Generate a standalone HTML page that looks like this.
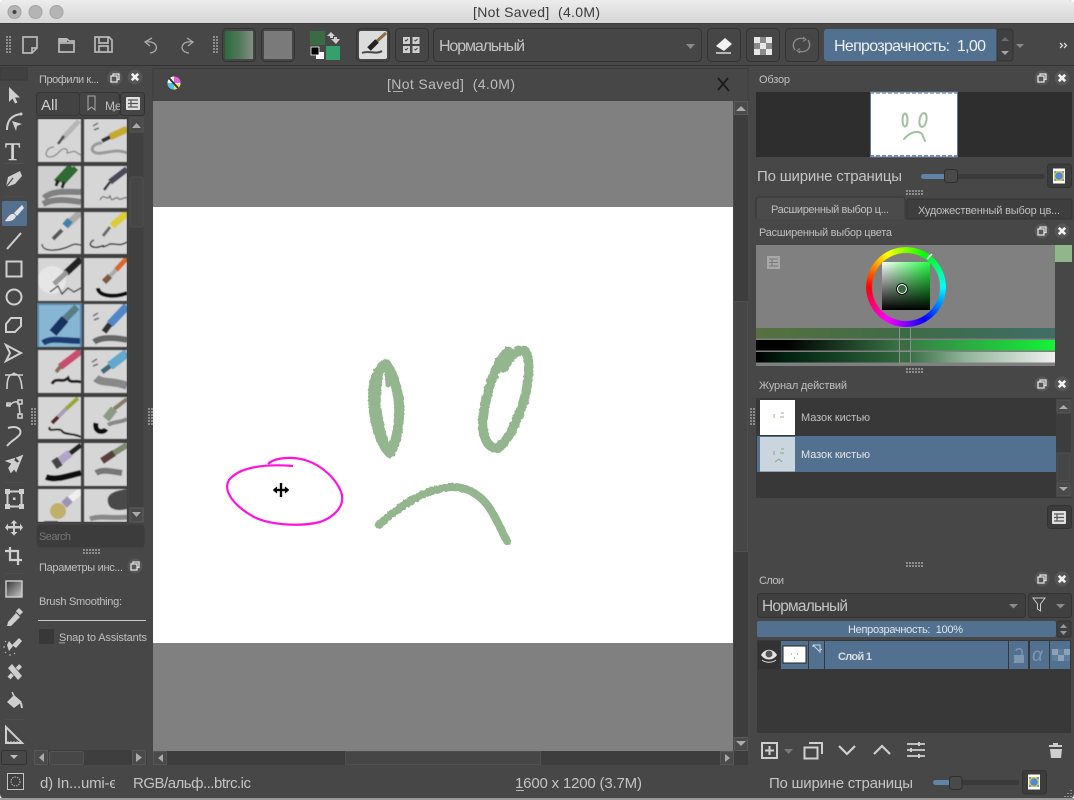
<!DOCTYPE html>
<html><head><meta charset="utf-8"><title>Krita</title>
<style>
html,body{margin:0;padding:0;background:#fff;width:1074px;height:800px;overflow:hidden}
svg.main{position:absolute;left:0;top:0;filter:blur(.35px)}
#wheel{position:absolute;left:866px;top:247px;width:80px;height:80px;border-radius:50%;
background:conic-gradient(from -90deg,#f00,#ff0,#0f0,#0ff,#00f,#f0f,#f00);
-webkit-mask:radial-gradient(circle,transparent 33.5px,#000 34.5px);mask:radial-gradient(circle,transparent 33.5px,#000 34.5px);filter:blur(.3px)}
text{font-family:"Liberation Sans",sans-serif;fill:#c4c4c4;white-space:pre}
.s{font-size:11px;fill:#c0c0c0}
.m{font-size:15px;fill:#c4c4c4}
.l{font-size:16px}
.ic{fill:none;stroke:#cfcfcf;stroke-width:2}
.t{fill:none;stroke:#b8b8b8;stroke-width:1.700}
.f{fill:#cfcfcf}
.btn{fill:#464646;stroke:#333;stroke-width:1}
</style></head><body>
<svg class="main" width="1074" height="800" viewBox="0 0 1074 800" xmlns="http://www.w3.org/2000/svg">
<defs>
<filter id="sb" x="0" y="0" width="1" height="1"><feGaussianBlur stdDeviation=".55"/></filter>
<filter id="rough" x="-10%" y="-10%" width="120%" height="120%"><feTurbulence type="fractalNoise" baseFrequency=".35" numOctaves="2" seed="4"/><feDisplacementMap in="SourceGraphic" scale="2.500"/></filter>
<linearGradient id="tb" x1="0" y1="0" x2="0" y2="1"><stop offset="0" stop-color="#ececec"/><stop offset="1" stop-color="#d5d5d5"/></linearGradient>
<pattern id="dots" width="3" height="3" patternUnits="userSpaceOnUse"><rect width="2" height="2" fill="#8c8c8c"/></pattern>
<pattern id="dash" width="6" height="2" patternUnits="userSpaceOnUse"><rect width="4" height="2" fill="#7590a8"/></pattern>
<linearGradient id="gr1" x1="0" y1="0" x2="1" y2="0"><stop offset="0" stop-color="#2c6a3e"/><stop offset=".5" stop-color="#4f7a5a"/><stop offset="1" stop-color="#858c86"/></linearGradient>
<linearGradient id="gtool" x1="0" y1="0" x2="1" y2="1"><stop offset="0" stop-color="#333"/><stop offset="1" stop-color="#c8c8c8"/></linearGradient>
<linearGradient id="s1"><stop offset="0" stop-color="#57713f"/><stop offset=".5" stop-color="#3e6b47"/><stop offset="1" stop-color="#3f6e66"/></linearGradient>
<linearGradient id="s2"><stop offset="0" stop-color="#000"/><stop offset=".1" stop-color="#000"/><stop offset=".5" stop-color="#3a7a48"/><stop offset="1" stop-color="#14f238"/></linearGradient>
<linearGradient id="s3"><stop offset="0" stop-color="#000"/><stop offset=".1" stop-color="#021"/><stop offset=".5" stop-color="#33693f"/><stop offset=".7" stop-color="#92b49a"/><stop offset="1" stop-color="#f0f0f0"/></linearGradient>
<linearGradient id="sqh"><stop offset="0" stop-color="#fff"/><stop offset="1" stop-color="#22ff44"/></linearGradient>
<linearGradient id="sqv" x1="0" y1="0" x2="0" y2="1"><stop offset="0" stop-color="#000" stop-opacity="0"/><stop offset="1" stop-color="#000"/></linearGradient>
<g id="restore"><circle r="7.5" fill="#565656"/><path d="M-2 -2V-4H4V1.500H2M-4 -2H2V4H-4Z" fill="none" stroke="#e2e2e2" stroke-width="1.300"/></g>
<g id="close"><circle r="7.500" fill="#565656"/><path d="M-3.200 -3.200L3.200 3.200M3.200 -3.200L-3.200 3.200" stroke="#f2f2f2" stroke-width="2.600"/></g>
<rect id="gh" width="18" height="5" fill="url(#dots)"/>
<rect id="gv" width="5" height="18" fill="url(#dots)"/>
<g id="listicon"><rect x="0" y="0" width="14" height="13" fill="#e0e0e0" rx="1"/><path d="M2 3H12M2 6.500H12M2 10H12M5 3V10" stroke="#555" stroke-width="1.200" fill="none"/></g>
<g id="mosaic"><rect x="-6" y="-7.500" width="12" height="15" fill="#fff"/><rect x="-5" y="-5" width="10" height="10" fill="#e0c73a"/><circle r="3.800" fill="#4e8ad8"/><path d="M-5 -5h2v2h-2zM3 -5h2v2h-2zM-5 3h2v2h-2zM3 3h2v2h-2z" fill="#5fa8dd"/></g>
</defs>

<!-- window -->
<rect x="0" y="0" width="1074" height="799" rx="5" fill="#474747"/>
<rect x="0" y="798" width="1074" height="2" fill="#9a9a9a"/>
<path d="M0 24V5Q0 0 5 0H1069Q1074 0 1074 5V24Z" fill="url(#tb)"/>
<rect x="0" y="23" width="1074" height="1" fill="#3c3c3c"/>
<circle cx="14.500" cy="12" r="6.500" fill="#b4b4b4" stroke="#a4a4a4"/><circle cx="14.500" cy="12" r="2" fill="#444"/>
<circle cx="35.500" cy="12" r="6.500" fill="#b4b4b4" stroke="#a4a4a4"/>
<circle cx="56.500" cy="12" r="6.500" fill="#b4b4b4" stroke="#a4a4a4"/>
<text x="473" y="17" font-size="14" style="fill:#3a3a3a" textLength="127">[Not Saved]  (4.0M)</text>

<!-- toolbar -->
<rect x="0" y="65" width="1074" height="1" fill="#343434"/>
<rect x="5" y="35" width="6" height="18" fill="url(#dots)"/>
<path d="M23 37H37V48L32 53H23Z M32 53V48H37" class="t"/>
<path d="M59 39H67L69 41H74V52H59Z M59 43H74" class="t"/><path d="M59 38h8v4h-8z" fill="#b8b8b8"/>
<path d="M95 37H109L112 40V52H95Z M99 37V43H108V37 M99 52V46H108V52" class="t"/>
<path d="M152 38L145 42L150 46" class="ic" style="stroke-width:1.300;stroke:#aaa"/><path d="M146 42C158 40 160 52 150 53" class="ic" style="stroke-width:1.300;stroke:#aaa"/>
<path d="M187 38L193 42L188 46" class="ic" style="stroke-width:1.300;stroke:#aaa"/><path d="M192 42C181 40 178 52 189 53" class="ic" style="stroke-width:1.300;stroke:#aaa"/>
<rect x="213" y="35" width="6" height="18" fill="url(#dots)"/>
<rect x="222.500" y="28.500" width="33" height="33" rx="4" class="btn"/><rect x="225" y="31" width="28" height="28" fill="url(#gr1)"/>
<rect x="261.500" y="28.500" width="33" height="33" rx="4" class="btn"/><rect x="264" y="31" width="28" height="28" fill="#7a7a7a"/>
<rect x="310" y="31" width="15" height="14" fill="#3a6b42"/>
<path d="M331 32L327 36H330V38H333V36H335Z M336 44L340 39H337V37H334V39H331Z" class="f"/>
<rect x="316" y="52" width="8" height="7" fill="#fff"/><rect x="311" y="47" width="8" height="8" fill="#000" stroke="#fff" stroke-width=".8"/>
<rect x="326" y="46" width="14" height="14" fill="#35a06c"/>
<rect x="356.500" y="28.500" width="33" height="33" rx="4" class="btn"/>
<rect x="359" y="31" width="28" height="28" rx="2" fill="#dcdcdc"/>
<path d="M386 33L376 42" stroke="#8a6c3e" stroke-width="3"/><path d="M377 41L369 49" stroke="#222" stroke-width="5"/><path d="M362 53C368 50 376 55 382 51" stroke="#444" stroke-width="2" fill="none"/>
<rect x="395.500" y="28.500" width="33" height="33" rx="4" class="btn"/>
<g fill="#d0d0d0"><rect x="403" y="37" width="7" height="7"/><rect x="412.500" y="37" width="7" height="7"/><rect x="403" y="46" width="7" height="7"/><rect x="412.500" y="46" width="7" height="7"/></g>
<path d="M405 40l1 1 2-2M414.500 40l1 1 2-2M405 49l1 1 2-2M414.500 49l1 1 2-2" stroke="#444" fill="none"/>
<rect x="433.500" y="28.500" width="268" height="33" rx="4" class="btn"/>
<text x="439" y="51" class="l" textLength="86">Нормальный</text>
<path d="M686 44H695L690.500 49Z" fill="#8a8a8a"/>
<rect x="707.500" y="28.500" width="33" height="33" rx="4" class="btn"/>
<path d="M716 46L725 38L732 44L724 51Z" fill="#f2f2f2"/><path d="M716 53H731" stroke="#ddd" stroke-width="1.500"/>
<rect x="746.500" y="28.500" width="33" height="33" rx="4" class="btn"/>
<g fill="#e8e8e8"><rect x="754" y="37" width="6" height="6"/><rect x="766" y="37" width="6" height="6"/><rect x="760" y="43" width="6" height="6"/><rect x="754" y="49" width="6" height="6"/><rect x="766" y="49" width="6" height="6"/></g>
<g fill="#8a8a8a"><rect x="760" y="37" width="6" height="6"/><rect x="754" y="43" width="6" height="6"/><rect x="766" y="43" width="6" height="6"/><rect x="760" y="49" width="6" height="6"/></g>
<rect x="785.500" y="28.500" width="33" height="33" rx="4" class="btn"/>
<path d="M795 50C790 43 797 36 804 39M808 40C813 47 806 54 799 51" fill="none" stroke="#8e8e8e" stroke-width="1.300"/><path d="M803 37l3 2.500-3 2M800 53l-3-2.500 3-2" fill="none" stroke="#8e8e8e"/>
<rect x="824" y="29" width="173" height="32" rx="3" fill="#52708f"/>
<text x="834" y="51" class="l" style="fill:#eef1f4" textLength="152">Непрозрачность:  1,00</text>
<rect x="997" y="29" width="16" height="32" rx="3" fill="#404040" stroke="#333"/>
<path d="M1001 41L1005 37L1009 41Z" fill="#6c6c6c"/><path d="M1001 51L1009 51L1005 55Z" fill="#a4a4a4"/>
<path d="M1016 44H1024L1020 48Z" fill="#8a8a8a"/>
<path d="M1060 43L1062.500 45.500L1060 48M1064 43L1066.500 45.500L1064 48" fill="none" stroke="#d8d8d8" stroke-width="1.300"/>

<!-- toolbox -->
<rect x="0" y="68" width="27" height="12" fill="#414141" stroke="#393939"/>
<path d="M9 87V102L12.500 98.500L15 103.500L17.500 102.500L15 97.500H20Z" class="f"/>
<path d="M7 130C7 120 12 115 21 114" class="ic"/><path d="M12 121L22 124L17 126L16 131Z" class="f"/><circle cx="21" cy="114" r="1.500" class="f"/>
<text x="5" y="160" style="font-family:'Liberation Serif',serif;font-size:25px;fill:#d2d2d2;stroke:#d2d2d2;stroke-width:.4">T</text>
<path d="M20 171L8 177L6 187L15 184L22 176Z" class="f"/><path d="M6 187L13 178" stroke="#474747" stroke-width="1.200"/>
<rect x="2" y="201" width="25" height="25" rx="2" fill="#54708f"/>
<path d="M22 205L14 213L17 216L24 208Z M14 214C10 213 8 217 5 221C10 222 15 220 16 216Z" fill="#e4e4e4"/>
<path d="M7 249L21 233" class="ic"/>
<rect x="6.500" y="261.500" width="15" height="15" class="ic"/>
<circle cx="14" cy="297" r="7.500" class="ic"/>
<path d="M11 318H21V326L15 332H6V324Z" class="ic"/>
<path d="M6 345L21 353L6 361L10 353Z" class="ic"/>
<path d="M7 389C7 376 10 374 14 374C18 374 21 376 22 389M5 375L23 375" class="ic" style="stroke-width:1.600"/><circle cx="14" cy="374" r="1.500" class="f"/>
<path d="M6 405H10C14 401 17 401 19 404L20 415M7 403h3v3H7zM18 414h4v4h-4zM18 400h4v4h-4z" class="ic" style="stroke-width:1.600"/>
<path d="M8 428C18 425 22 430 20 434C18 438 12 440 7 446" class="ic"/>
<path d="M22 456L17 458L20 461ZM9 468L14 461L18 464L11 472ZM7 461L14 459L12 463Z M20 461L16 471L14 468Z" class="f" style="stroke:#cfcfcf;stroke-width:1.500"/>
<rect x="7.500" y="491.500" width="14" height="15" class="ic"/><g class="f"><rect x="5" y="489" width="5" height="5"/><rect x="19" y="489" width="5" height="5"/><rect x="5" y="504" width="5" height="5"/><rect x="19" y="504" width="5" height="5"/><rect x="13" y="497.500" width="2.500" height="2.500"/></g>
<path d="M14 520L10.500 523.500H13V526H8V523.500L5 527.500L8 531V528.500H13V532H10.500L14 535.500L17.500 532H15V528.500H20V531L23 527.500L20 523.500V526H15V523.500H17.500Z" class="f"/>
<path d="M10 547V560H22M5 551H18V565" class="ic" style="stroke-width:2.200"/>
<rect x="6" y="581" width="16" height="16" fill="url(#gtool)" stroke="#d0d0d0" stroke-width="1.400"/>
<path d="M7 626L8 622L16 613L20 617L11 626Z" class="f"/><path d="M15 612L19 608L23 612L19 616Z" class="f"/><path d="M14 610L21 617" stroke="#474747"/>
<path d="M12 645L19 638L22 641L16 648Z" class="f"/><path d="M9 641L13 646L9 651L7 645Z" class="f"/><path d="M6 652l-1 1M10 654v2M14 653l1 1M5 647H3M6 642l-1-1" stroke="#bbb"/>
<path d="M8 668L12 664L22 676L18 680Z" class="f"/><path d="M9 678L21 665" stroke="#cfcfcf" stroke-width="4" stroke-dasharray="5 1"/>
<path d="M7 702L14 695L22 702L14 708Z" class="f"/><path d="M12 692L14 696" stroke="#cfcfcf" stroke-width="1.500"/><path d="M21 703L22 708" stroke="#cfcfcf" stroke-width="2"/>
<path d="M6 727V743H22Z" class="ic"/><path d="M8 743v-2M11 743v-2M14 743v-2M17 743v-2" stroke="#cfcfcf"/>
<g fill="#5a5a5a"><rect x="4" y="163" width="20" height="1" opacity=".5"/><rect x="5" y="196" width="19" height=".8" opacity=".5"/><rect x="5" y="482" width="19" height=".8" opacity=".5"/><rect x="5" y="573" width="19" height=".8" opacity=".5"/><rect x="5" y="719" width="19" height=".8" opacity=".5"/></g>
<rect x="1.500" y="750.500" width="25" height="14" rx="2" fill="#474747" stroke="#333"/><path d="M10 755H18L14 759Z" fill="#bdbdbd"/>
<use href="#gv" x="31" y="408"/>

<!-- brush presets docker -->
<text x="39" y="83" class="s" textLength="60">Профили к...</text>
<use href="#restore" x="115" y="78"/><use href="#close" x="135" y="77"/>
<rect x="36.500" y="92.500" width="43" height="23" rx="3" fill="#434343" stroke="#353535"/>
<text x="41" y="110" font-size="15" style="fill:#d0d0d0">All</text>
<rect x="79.500" y="92.500" width="40" height="23" rx="3" fill="#454545" stroke="#353535"/>
<path d="M88 96H95V110L91.500 107L88 110Z" fill="none" stroke="#aaa"/>
<text x="105" y="110" class="s" style="font-size:12px">Me</text>
<path d="M111 109h6l-3 3z" fill="#8a8a8a"/>
<rect x="120.500" y="92.500" width="24" height="23" rx="3" fill="#454545" stroke="#333"/>
<use href="#listicon" x="126" y="97"/>
<rect x="36" y="117" width="92" height="406" fill="#404040"/>
<!-- thumbs -->
<g filter="url(#sb)">
<svg x="38" y="119" width="43" height="43"><rect width="43" height="43" fill="#d6d6d6"/><path d="M41 2L24 20" stroke="#b5b5b5" stroke-width="5"/><path d="M26 17L20 25" stroke="#444" stroke-width="2.500"/><path d="M16 28C8 28 5 38 12 38C20 38 22 28 28 30C32 32 25 36 33 33C38 31 38 34 43 36" fill="none" stroke="#888" stroke-width="1.300"/></svg>
<svg x="84" y="119" width="43" height="43"><rect width="43" height="43" fill="#d6d6d6"/><path d="M43 10L26 18" stroke="#c8aa2c" stroke-width="7"/><path d="M26 18L18 22" stroke="#333" stroke-width="4"/><path d="M18 24C6 24 4 36 18 34C26 33 34 30 43 34" fill="none" stroke="#999" stroke-width="3"/><path d="M9 7L14 4M10 11L15 9" stroke="#666" stroke-width="1.500"/></svg>
<svg x="38" y="166" width="43" height="42"><rect width="43" height="42" fill="#cfcfcf"/><path d="M38 2L24 17M33 0L18 16" stroke="#2e6a32" stroke-width="6"/><path d="M20 14L18 20M26 16L24 22" stroke="#222" stroke-width="3"/><path d="M6 32C14 24 30 26 43 26M5 38C16 32 30 34 43 36" stroke="#666" stroke-width="6" fill="none" opacity=".75"/></svg>
<svg x="84" y="166" width="43" height="42"><rect width="43" height="42" fill="#d6d6d6"/><path d="M43 3L26 16" stroke="#4a4a5a" stroke-width="6"/><path d="M26 16L20 24" stroke="#333" stroke-width="2.500"/><path d="M16 34C20 26 22 36 26 30C28 38 30 30 34 32C36 36 40 30 43 32" fill="none" stroke="#666" stroke-width="1.200"/></svg>
<svg x="38" y="212" width="43" height="42"><rect width="43" height="42" fill="#d6d6d6"/><path d="M43 0L28 14" stroke="#aaa" stroke-width="7"/><path d="M32 8L27 14" stroke="#3e82aa" stroke-width="7"/><path d="M24 18L15 27" stroke="#555" stroke-width="4"/><path d="M4 32C4 40 20 40 34 33C38 31 40 33 43 33" fill="none" stroke="#222" stroke-width="1.300"/></svg>
<svg x="84" y="212" width="43" height="42"><rect width="43" height="42" fill="#d6d6d6"/><path d="M43 1L28 14" stroke="#ddcc33" stroke-width="7"/><path d="M26 15L19 24" stroke="#666" stroke-width="3"/><path d="M10 28C2 32 8 38 18 34C22 32 14 38 26 32C30 31 36 35 43 30" fill="none" stroke="#333" stroke-width="1.500"/></svg>
<svg x="38" y="258" width="43" height="43"><rect width="43" height="43" fill="#d6d6d6"/><circle cx="14" cy="22" r="14" fill="#e6e6e6"/><path d="M43 1L28 15" stroke="#222" stroke-width="7"/><path d="M29 14L16 26" stroke="#999" stroke-width="5"/><path d="M12 34L20 28L24 36L30 30L36 34L43 30" fill="none" stroke="#333" stroke-width="1.300"/></svg>
<svg x="84" y="258" width="43" height="43"><rect width="43" height="43" fill="#d6d6d6"/><path d="M43 0L32 12" stroke="#d8682a" stroke-width="5"/><path d="M32 12L26 18" stroke="#aaa" stroke-width="4"/><path d="M26 18L20 24" stroke="#7a5a3c" stroke-width="6"/><path d="M14 30C14 38 30 40 43 35" fill="none" stroke="#111" stroke-width="4"/></svg>
<rect x="37" y="303" width="45" height="44" fill="#5a85a8"/>
<svg x="39" y="305" width="41" height="42"><rect width="41" height="42" fill="#86b6d4"/><path d="M38 2L24 16" stroke="#5a7d85" stroke-width="7"/><path d="M26 14L14 28" stroke="#13305e" stroke-width="9"/><path d="M4 38C12 32 26 36 41 36" stroke="#1c3c72" stroke-width="6" fill="none"/></svg>
<svg x="84" y="304" width="43" height="43"><rect width="43" height="43" fill="#d6d6d6"/><path d="M43 2L26 20" stroke="#4f86c8" stroke-width="8"/><path d="M26 20L20 28" stroke="#333" stroke-width="6"/><path d="M10 38C18 32 34 34 43 36" stroke="#666" stroke-width="6" fill="none"/><path d="M9 12L14 9M10 16L15 14" stroke="#666" stroke-width="1.500"/></svg>
<svg x="38" y="350" width="43" height="43"><rect width="43" height="43" fill="#d6d6d6"/><path d="M43 1L22 17" stroke="#c84e6e" stroke-width="7"/><path d="M23 16L18 22" stroke="#8a6c5a" stroke-width="4"/><path d="M14 34C18 26 24 34 30 28C32 34 36 30 43 32" fill="none" stroke="#222" stroke-width="3"/></svg>
<svg x="84" y="350" width="43" height="43"><rect width="43" height="43" fill="#d6d6d6"/><path d="M43 3L26 16" stroke="#62a8cc" stroke-width="9"/><path d="M26 16L18 22" stroke="#3e6a7a" stroke-width="5"/><path d="M12 28C18 34 30 30 43 36" stroke="#666" stroke-width="8" fill="none" opacity=".7"/><path d="M8 12L13 9M9 16L14 14" stroke="#666" stroke-width="1.500"/></svg>
<svg x="38" y="397" width="43" height="42"><rect width="43" height="42" fill="#d6d6d6"/><path d="M40 1L28 12" stroke="#9aa82e" stroke-width="4"/><path d="M28 12L20 20" stroke="#a99aba" stroke-width="4"/><path d="M20 20L14 26" stroke="#582222" stroke-width="4"/><path d="M12 30C8 36 22 30 24 34C26 38 36 36 43 40" fill="none" stroke="#111" stroke-width="2"/></svg>
<svg x="84" y="397" width="43" height="42"><rect width="43" height="42" fill="#d6d6d6"/><path d="M43 2L30 12" stroke="#8a7a62" stroke-width="4"/><path d="M30 12L22 22" stroke="#8a9a84" stroke-width="8"/><path d="M12 26C10 36 20 36 22 32" stroke="#111" stroke-width="5" fill="none"/><path d="M24 28C30 24 36 26 43 22" stroke="#888" stroke-width="4" fill="none"/></svg>
<svg x="38" y="443" width="43" height="43"><rect width="43" height="43" fill="#d6d6d6"/><path d="M43 2L30 12" stroke="#222" stroke-width="5"/><path d="M32 10L22 18" stroke="#b2a6c8" stroke-width="8"/><path d="M22 18L16 22" stroke="#444" stroke-width="10"/><path d="M8 34C18 38 32 32 43 30" stroke="#111" stroke-width="6" fill="none"/></svg>
<svg x="84" y="443" width="43" height="43"><rect width="43" height="43" fill="#d6d6d6"/><path d="M43 2L30 10" stroke="#7a8a6a" stroke-width="6"/><path d="M30 10L18 18" stroke="#5a3c3c" stroke-width="7"/><path d="M12 30C18 26 26 28 38 30" stroke="#777" stroke-width="6" fill="none"/></svg>
<svg x="38" y="489" width="43" height="33"><rect width="43" height="33" fill="#d6d6d6"/><path d="M43 2L30 12" stroke="#eee" stroke-width="7"/><path d="M32 10L26 16" stroke="#a094b6" stroke-width="8"/><circle cx="20" cy="22" r="8" fill="#c0b06a"/><path d="M6 33H20" stroke="#444" stroke-width="2"/></svg>
<svg x="84" y="489" width="43" height="33"><rect width="43" height="33" fill="#d6d6d6"/><path d="M24 14C22 6 28 2 43 0V20C36 22 26 22 24 14Z" fill="#4a4a4a"/><path d="M6 30C16 26 30 30 43 28" stroke="#888" stroke-width="5" fill="none"/></svg>
</g>
<rect x="128.500" y="117.500" width="15" height="406" fill="#404040"/>
<rect x="130" y="118" width="13" height="14" fill="#4a4a4a" stroke="#555"/><path d="M132 128L136.500 123L141 128Z" fill="#aaa"/>
<rect x="130" y="177" width="13" height="50" rx="2" fill="#464646" stroke="#4f4f4f"/>
<rect x="130" y="508" width="13" height="14" fill="#4a4a4a" stroke="#5c5c5c"/><path d="M132 512L141 512L136.500 517Z" fill="#aaa"/>
<rect x="36.500" y="524.500" width="108" height="23" rx="3" fill="#3c3c3c"/>
<text x="39" y="540" class="s" style="fill:#767676" textLength="32">Search</text>
<use href="#gh" x="83" y="549"/>
<text x="39" y="571" class="s" textLength="84">Параметры инс...</text>
<use href="#restore" x="135" y="566"/>
<text x="39" y="605" class="s" textLength="83">Brush Smoothing:</text>
<rect x="38" y="620" width="108" height="1" fill="#c8c8c8"/>
<rect x="39" y="629" width="15" height="15" fill="#383838"/>
<text x="59" y="641" class="s" textLength="88">Snap to Assistants</text>
<rect x="59" y="642.500" width="6" height=".8" fill="#bbb"/>
<!-- bottom-left scrollbar -->
<rect x="34" y="750" width="113" height="15" fill="#3e3e3e"/>
<rect x="34.500" y="750.500" width="13" height="14" fill="#4a4a4a" stroke="#565656"/><path d="M44 753V762L39 757.500Z" fill="#aaa"/>
<rect x="49.500" y="751.500" width="34" height="13" rx="2" fill="#474747" stroke="#545454"/>
<rect x="132.500" y="750.500" width="13" height="14" fill="#4a4a4a" stroke="#565656"/><path d="M136 753V762L142 757.500Z" fill="#aaa"/>

<!-- canvas subwindow -->
<rect x="149" y="68" width="599" height="33" fill="#474747"/>
<path d="M153 101V68.500H748V101" fill="none" stroke="#3c3c3c"/>
<circle cx="174" cy="83" r="6.500" fill="#fff"/><path d="M174 76.500A6.500 6.500 0 0 1 180.500 83H174Z" fill="#e95fd8"/><path d="M174 89.500A6.500 6.500 0 0 0 180 84H174Z" fill="#f4df50"/><path d="M167.500 83A6.500 6.500 0 0 0 174 89.500V83Z" fill="#4cc4e4"/><path d="M169 78L178 88" stroke="#333" stroke-width="2"/>
<text x="387" y="89" font-size="14" style="fill:#bdbdbd" textLength="128">[Not Saved]  (4.0M)</text>
<rect x="393" y="91" width="10" height="1" fill="#aaa"/>
<path d="M718 78L729 91M728 78L718 90" stroke="#1b1b1b" stroke-width="1.800"/>
<rect x="153" y="101" width="580" height="650" fill="#808080"/>
<rect x="153" y="207" width="580" height="436" fill="#fff"/>
<!-- drawing -->
<g fill="none" stroke="#94b68e" stroke-linecap="round" stroke-linejoin="round" filter="url(#rough)">
<path d="M386 364C379 367 373 380 373 396C373 420 380 444 390 453C396 444 400 425 399 405C398 388 392 372 386 364Z" stroke-width="10"/>
<path d="M384 365C378 375 376 395 378 410C380 425 384 440 388 450" stroke-width="7"/>
<path d="M386 365C388 370 387 376 388 385" stroke-width="5"/>
<path d="M508 351C496 363 486 390 483 420C482 436 487 448 497 448C507 444 518 420 524 400C529 382 531 358 525 351C518 348 510 356 504 368" stroke-width="9.500"/>
<path d="M379 525C395 510 420 490 450 487C470 486 484 498 492 512C498 522 502 532 507 541" stroke-width="8"/>
</g>
<path d="M293 466C268 464 240 466 229 480C222 492 236 507 254 517C270 525 300 527 320 522C334 517 344 507 342 495C338 480 322 465 305 460C290 456 274 458 268 464" fill="none" stroke="#ff12de" stroke-width="2.200"/>
<path d="M281 483V497M274 490H288" stroke="#aaa" stroke-width="4.500" opacity=".3"/>
<path d="M281 483V497M274 490H288" stroke="#000" stroke-width="2.200"/><path d="M277 487L273.500 490L277 493M285 487L288.500 490L285 493" fill="#000" stroke="#000"/>

<!-- canvas right scrollbar -->
<rect x="734" y="101" width="14" height="650" fill="#3d3d3d"/>
<rect x="734.500" y="101.500" width="13" height="13" fill="#4a4a4a" stroke="#5a5a5a"/><path d="M736 111L741 106L746 111Z" fill="#aaa"/>
<rect x="734.500" y="301.500" width="13" height="250" fill="#464646" stroke="#4f4f4f"/>
<rect x="734.500" y="737.500" width="13" height="13" fill="#4a4a4a" stroke="#5a5a5a"/><path d="M736 741H746L741 746Z" fill="#aaa"/>
<use href="#gv" x="148" y="408"/>
<!-- canvas bottom scrollbar -->
<rect x="153" y="751" width="595" height="14" fill="#3d3d3d"/>
<rect x="153.500" y="751.500" width="13" height="13" fill="#4a4a4a" stroke="#565656"/><path d="M163 754V762L158 758Z" fill="#aaa"/>
<rect x="345.500" y="751.500" width="195" height="13" fill="#464646" stroke="#505050"/>
<rect x="720.500" y="751.500" width="13" height="13" fill="#4a4a4a" stroke="#565656"/><path d="M725 754V762L730 758Z" fill="#aaa"/>

<!-- right: overview -->
<text x="759" y="83" class="s" textLength="31">Обзор</text>
<use href="#restore" x="1042" y="78"/><use href="#close" x="1062" y="78"/>
<rect x="756" y="92" width="316" height="65" fill="#2e2e2e"/>
<rect x="870.500" y="92" width="87" height="65" fill="#fff" stroke="#5a7a98"/>
<rect x="871" y="92" width="86" height="2" fill="url(#dash)" opacity=".7"/>
<rect x="871" y="155" width="86" height="2" fill="url(#dash)"/>
<g fill="none" stroke="#a3c09e" stroke-linecap="round"><ellipse cx="905" cy="120" rx="2.500" ry="6.500" stroke-width="2"/><ellipse cx="923" cy="120" rx="3.500" ry="7" transform="rotate(10 923 120)" stroke-width="2"/><path d="M904 139C910 132 918 130 922 134L925 141" stroke-width="2"/></g>
<text x="757" y="181" class="m" textLength="145">По ширине страницы</text>
<rect x="921" y="174" width="124" height="5" rx="2.500" fill="#3a3a3a"/><rect x="921" y="174" width="26" height="5" rx="2.500" fill="#5f84a8"/>
<rect x="944.500" y="169.500" width="13" height="13" rx="3" fill="#4a4a4a" stroke="#2f2f2f"/>
<rect x="1047.500" y="164" width="24" height="23.500" rx="3" fill="#3c3c3c" stroke="#333"/><use href="#mosaic" x="1059" y="176"/>
<use href="#gh" x="906" y="190"/>
<!-- tabs -->
<path d="M756 219V200Q756 197 759 197H902Q905 197 905 200V219" fill="#4b4b4b" stroke="#353535"/>
<path d="M907 219V201Q907 199 909 199H1070Q1072 199 1072 201V219Z" fill="#3e3e3e" stroke="#333"/>
<text x="771" y="213" class="s" textLength="118">Расширенный выбор ц...</text>
<text x="918" y="214" class="s" textLength="142">Художественный выбор цв...</text>
<text x="759" y="236" class="s" textLength="133">Расширенный выбор цвета</text>
<use href="#restore" x="1042" y="231"/><use href="#close" x="1062" y="231"/>
<!-- color selector -->
<rect x="756" y="245" width="299" height="121" fill="#808080"/>
<rect x="1055" y="245" width="17" height="17" fill="#91b68c"/>
<rect x="767" y="256" width="13" height="13" fill="#a8a8a8"/><path d="M769 259H778M769 262.500H778M769 266H778M772 259V266" stroke="#777" fill="none"/>
<rect x="882" y="262" width="48" height="48" fill="url(#sqh)"/><rect x="882" y="262" width="48" height="48" fill="url(#sqv)"/>
<circle cx="902" cy="289" r="4.500" fill="#39683f" stroke="#fff" stroke-width="1"/><circle cx="902" cy="289" r="5.500" fill="none" stroke="#000" stroke-width=".8"/>
<rect x="756" y="328" width="299" height="10.500" fill="url(#s1)"/>
<rect x="756" y="340" width="299" height="10.500" fill="url(#s2)"/>
<rect x="756" y="352" width="299" height="10.500" fill="url(#s3)"/>
<rect x="900" y="328" width="10" height="11" fill="#3a6b42"/><rect x="900" y="340" width="10" height="11" fill="#3a6b42"/><rect x="900" y="352" width="10" height="11" fill="#3a6b42"/>
<g fill="none" stroke="#8d8d8d"><rect x="899.500" y="327.500" width="11" height="11.500"/><rect x="899.500" y="339.500" width="11" height="11.500"/><rect x="899.500" y="351.500" width="11" height="11.500"/></g>
<use href="#gh" x="906" y="368"/>
<text x="759" y="389" class="s" textLength="88">Журнал действий</text>
<use href="#restore" x="1042" y="384"/><use href="#close" x="1062" y="384"/>
<!-- history -->
<rect x="756" y="398" width="300" height="100" fill="#383838"/>
<rect x="760" y="400" width="35" height="35" fill="#fff"/>
<g fill="none" stroke="#94b68e"><path d="M774 414v4M781 413h3M780 417h4"/></g>
<text x="801" y="421" class="s" textLength="69">Мазок кистью</text>
<rect x="757" y="436" width="299" height="36" fill="#52708f"/>
<rect x="760" y="437" width="35" height="34.500" fill="#cbd5de"/>
<g fill="none" stroke="#86a888"><path d="M774 451v4M781 449h3M780 453h4M775 462l4-3 3 3"/></g>
<text x="801" y="458" class="s" style="fill:#e6e6e6" textLength="69">Мазок кистью</text>
<rect x="1056" y="398" width="15" height="100" fill="#3d3d3d"/>
<rect x="1057" y="400" width="13" height="13" fill="#4a4a4a" stroke="#565656"/><path d="M1059 409L1063.500 405L1068 409Z" fill="#aaa"/>
<rect x="1057" y="453" width="13" height="28" fill="#464646" stroke="#505050"/>
<rect x="1057" y="483" width="13" height="13" fill="#4a4a4a" stroke="#565656"/><path d="M1059 487H1068L1063.500 491Z" fill="#aaa"/>
<use href="#gv" x="750" y="408"/>
<rect x="1047.500" y="505.500" width="24" height="23" rx="3" fill="#3c3c3c" stroke="#333"/><use href="#listicon" x="1052" y="511"/>
<use href="#gh" x="906" y="562"/>
<!-- layers -->
<text x="759" y="584" class="s" textLength="25">Слои</text>
<use href="#restore" x="1042" y="579"/><use href="#close" x="1062" y="579"/>
<rect x="757.500" y="593.500" width="268" height="24" rx="3" fill="#3f3f3f" stroke="#333"/>
<text x="762" y="611" class="l" style="font-size:15.500px" textLength="86">Нормальный</text>
<path d="M1009 604H1018L1013.500 608.500Z" fill="#8a8a8a"/>
<rect x="1028.500" y="593.500" width="43" height="24" rx="3" fill="#404040" stroke="#333"/>
<path d="M1033 598H1045L1040.500 604V611L1037.500 609V604Z" fill="none" stroke="#ccc"/><path d="M1056 604H1065L1060.500 608.500Z" fill="#8a8a8a"/>
<rect x="757" y="621" width="299" height="16" rx="2" fill="#52708f"/>
<text x="848" y="633" class="s" style="fill:#e2e6ea;font-size:11px" textLength="115">Непрозрачность:  100%</text>
<rect x="1057" y="621" width="14" height="16" rx="2" fill="#3f3f3f" stroke="#333"/><path d="M1060 628L1063.500 624L1067 628ZM1060 631H1067L1063.500 635Z" fill="#999"/>
<rect x="757" y="640" width="314" height="93" fill="#383838"/>
<rect x="758" y="641" width="22" height="28" fill="#323232"/>
<path d="M761 655C765 648 773 648 777 655C773 661 765 661 761 655Z" fill="#e4e4e4"/><circle cx="769" cy="654" r="3.500" fill="#555"/><path d="M762 660C766 663 772 663 776 660" fill="none" stroke="#ddd"/>
<rect x="781" y="641" width="27" height="28" fill="#52708f"/><rect x="783" y="646" width="23" height="17" fill="#fff" stroke="#222"/><path d="M791 654h1M797 654h1M794 658h1" stroke="#7a9a7a"/>
<rect x="809" y="641" width="15" height="28" fill="#52708f"/><path d="M813 645H820V653M813 645L819 651L822 649M813 645v2" fill="none" stroke="#ccd6df"/>
<rect x="825" y="641" width="183" height="28" fill="#52708f"/>
<text x="838" y="660" class="s" style="font-weight:bold;fill:#d8dde2" textLength="34">Слой 1</text>
<rect x="1009" y="641" width="19" height="28" fill="#52708f"/><rect x="1014" y="655" width="10" height="8" fill="#7d97b0"/><path d="M1022 655V651C1022 648 1016 648 1016 651" fill="none" stroke="#7d97b0" stroke-width="1.500"/>
<rect x="1030" y="641" width="19" height="28" fill="#52708f"/><text x="1032" y="661" style="font-size:19px;font-style:italic;fill:#7d97b0">α</text>
<rect x="1050" y="641" width="20" height="28" fill="#52708f"/>
<g fill="#8ba3ba"><rect x="1052" y="649" width="6" height="6"/><rect x="1064" y="649" width="6" height="6"/><rect x="1058" y="655" width="6" height="6"/></g><g fill="#5f7c98"><rect x="1058" y="649" width="6" height="6"/><rect x="1052" y="655" width="6" height="6"/><rect x="1064" y="655" width="6" height="6"/></g>
<!-- layer buttons -->
<rect x="762" y="743" width="15" height="15" class="ic"/><path d="M769.500 746V755M765 750.500H774" class="ic"/>
<path d="M784 749H793L788.500 754Z" fill="#7a7a7a"/>
<path d="M809 743H822V754M804.500 747.500H817.500V758.500H804.500Z" class="ic"/>
<path d="M839 746L847 754L855 746" class="ic" style="stroke-width:2.200"/>
<path d="M874 754L882 746L890 754" class="ic" style="stroke-width:2.200"/>
<path d="M907 744H925M907 750H925M907 756H925" class="ic" style="stroke-width:1.800"/><path d="M919 742v4M911 748v4M919 754v4" class="ic"/>
<path d="M1049 746H1062M1053 744H1058" class="ic"/><path d="M1050 749H1062L1061 758H1051Z" class="f"/>

<!-- status bar -->
<rect x="7.500" y="773.500" width="16" height="16" fill="#3f3f3f" stroke="#c4c4c4"/><circle cx="15.500" cy="781.500" r="4.500" fill="none" stroke="#bbb" stroke-dasharray="1.500 1"/>
<svg x="40" y="770" width="75" height="26"><text x="0" y="18" class="m" textLength="77">d) In...umi-є</text></svg>
<text x="133" y="788" class="m" textLength="118">RGB/альф...btrc.ic</text>
<text x="515" y="788" class="m" textLength="127">1600 x 1200 (3.7M)</text>
<rect x="516" y="790" width="8" height="1" fill="#bbb"/>
<text x="769" y="788" class="m" textLength="144">По ширине страницы</text>
<rect x="933" y="780" width="86" height="5" rx="2.500" fill="#3a3a3a"/><rect x="933" y="780" width="18" height="5" rx="2.500" fill="#5f84a8"/>
<rect x="949.500" y="776.500" width="12.500" height="13" rx="3" fill="#4a4a4a" stroke="#2f2f2f"/>
<rect x="1022.500" y="770.500" width="24" height="23.500" rx="3" fill="#3c3c3c" stroke="#333"/><use href="#mosaic" x="1034" y="782"/>
<path d="M1071 790v1M1068 793v1M1071 793v1M1065 796v1M1068 796v1M1071 796v1" stroke="#8c8c8c" stroke-width="2"/>
</svg>
<div id="wheel"></div>
<svg style="position:absolute;left:0;top:0" width="1074" height="800"><path d="M927 259L932 254" stroke="#fff" stroke-width="1.600"/></svg>
</body></html>
